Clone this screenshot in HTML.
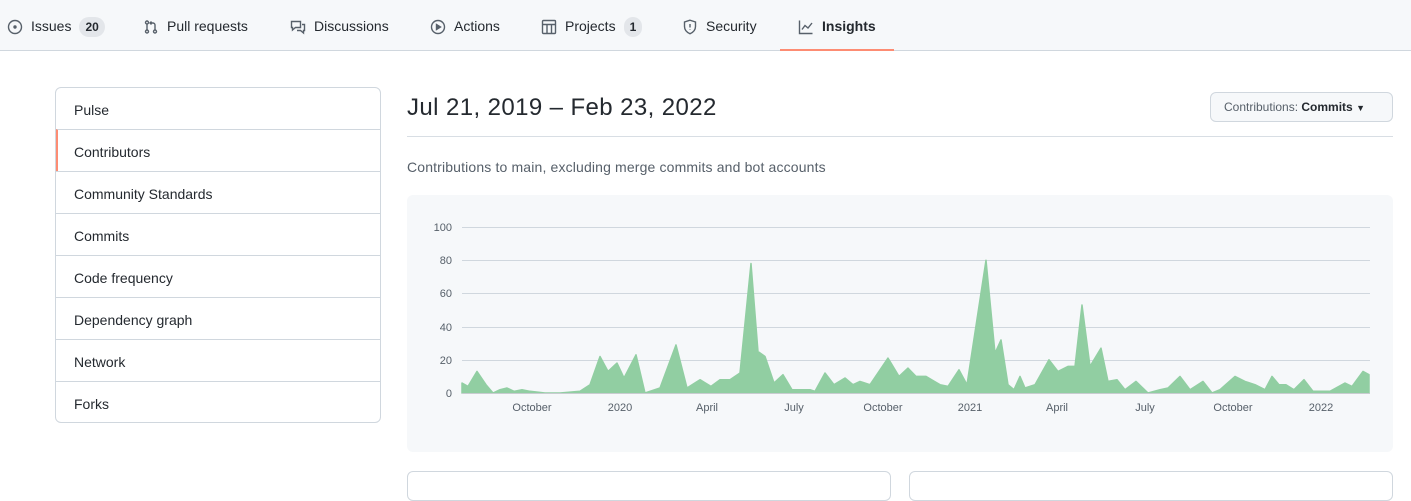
<!DOCTYPE html>
<html><head><meta charset="utf-8"><style>
*{box-sizing:border-box}
body{margin:0;width:1411px;height:480px;overflow:hidden;background:#fff;font-family:"Liberation Sans",sans-serif;color:#24292f}
.nav{position:absolute;left:0;top:0;width:1411px;height:51px;background:#f6f8fa;border-bottom:1px solid #d0d7de}
.tab{position:absolute;top:1px;height:51px;line-height:51px;font-size:14px;color:#24292f;display:flex;align-items:center;gap:8px}
.tab svg{width:16px;height:16px;fill:none;stroke:#57606a;stroke-width:1.4}
.cnt{display:inline-block;background:#e3e6ea;border-radius:10px;font-size:12px;line-height:20px;padding:0 6px;font-weight:bold;margin-left:0}
.side{position:absolute;left:55px;top:87px;width:326px;height:336px;border:1px solid #d0d7de;border-radius:6px;overflow:hidden}
.side div{height:42px;line-height:44px;padding-left:18px;font-size:14px;border-top:1px solid #d0d7de}
.side div:first-child{border-top:none;height:41px}
.side .on{border-left:2px solid #fd8c73;padding-left:16px}
</style></head><body>
<div class="nav">
<div class="tab" style="left:7px"><svg viewBox="0 0 16 16"><circle cx="8" cy="8" r="6.5"/><circle cx="8" cy="8" r="1" fill="#57606a"/></svg>Issues <span class="cnt">20</span></div>
<div class="tab" style="left:143px"><svg viewBox="0 0 16 16"><circle cx="4" cy="3.5" r="1.5"/><circle cx="4" cy="12.5" r="1.5"/><circle cx="12" cy="12.5" r="1.5"/><path d="M4 5v6M12 11V6a2 2 0 0 0-2-2H7M8.5 2.5 7 4l1.5 1.5"/></svg>Pull requests</div>
<div class="tab" style="left:290px"><svg viewBox="0 0 16 16"><path d="M1.5 2.5h9v6h-5l-3 2.5v-2.5h-1zM12 5.5h2.5v6h-1V14l-3-2.5H7"/></svg>Discussions</div>
<div class="tab" style="left:430px"><svg viewBox="0 0 16 16"><circle cx="8" cy="8" r="6.5"/><path d="M6.5 5.5v5l4-2.5z" fill="#57606a"/></svg>Actions</div>
<div class="tab" style="left:541px"><svg viewBox="0 0 16 16"><rect x="1.5" y="1.5" width="13" height="13" rx="1"/><path d="M1.5 5.5h13M6 5.5v9M10.5 5.5v9"/></svg>Projects <span class="cnt">1</span></div>
<div class="tab" style="left:682px"><svg viewBox="0 0 16 16"><path d="M8 1.2 2.5 3v4.5c0 3.5 2.7 6 5.5 7.3 2.8-1.3 5.5-3.8 5.5-7.3V3z"/><path d="M8 5v3.5M8 10.5v.5"/></svg>Security</div>
<div class="tab" style="left:798px;font-weight:bold"><svg viewBox="0 0 16 16"><path d="M1.5 1.5v13h13M4 10.5l3-4 3 2.5 4-5"/></svg>Insights</div>
<div style="position:absolute;left:780px;top:49px;width:114px;height:2px;background:#fd8c73"></div>
</div>
<div class="side">
<div>Pulse</div><div class="on">Contributors</div><div>Community Standards</div><div>Commits</div><div>Code frequency</div><div>Dependency graph</div><div>Network</div><div>Forks</div>
</div>
<div style="position:absolute;left:407px;top:94px;font-size:24px;letter-spacing:0.4px;color:#24292f">Jul 21, 2019 – Feb 23, 2022</div>
<div style="position:absolute;left:1210px;top:92px;width:183px;height:30px;border:1px solid #d0d7de;border-radius:6px;background:#f6f8fa;font-size:12px;line-height:29px;padding-left:13px;color:#57606a">Contributions: <b style="color:#24292f">Commits</b> <span style="font-size:9px;color:#24292f">▼</span></div>
<div style="position:absolute;left:407px;top:136px;width:986px;height:1px;background:#d8dee4"></div>
<div style="position:absolute;left:407px;top:159px;font-size:14px;color:#57606a;letter-spacing:0.15px">Contributions to main, excluding merge commits and bot accounts</div>
<div style="position:absolute;left:407px;top:195px;width:986px;height:257px;background:#f6f8fa;border-radius:6px"></div>
<svg style="position:absolute;left:0;top:0" width="1411" height="480">
<g stroke="#d0d7de" stroke-width="1"><path d="M462 227.5H1370M462 260.5H1370M462 293.5H1370M462 327.5H1370M462 360.5H1370M462 393.5H1370"/></g>
<g font-size="11" fill="#57606a" font-family="Liberation Sans,sans-serif" text-anchor="end"><text x="452" y="231">100</text><text x="452" y="264">80</text><text x="452" y="297">60</text><text x="452" y="331">40</text><text x="452" y="364">20</text><text x="452" y="397">0</text></g>
<path fill="#91cea2" stroke="#91cea2" stroke-width="1.5" stroke-linejoin="round" d="M462 393L462 383 468 386.4 477 371.4 486 384.7 493 393 500 389.7 507 388 514 391.3 522 389.7 530 391.3 545 393 560 393 580 391.3 590 384.7 600 356.5 608 371.4 617 363.1 624 378 636 354.8 645 393 660 388 676 344.9 687 388 700 379.7 711 386.4 720 379.7 730 379.7 740 373 751 263.5 758 351.5 765 356.5 774 383 783 374.7 792 389.7 810 389.7 815 391.3 825 373 834 384.7 845 378 853 384.7 860 381.4 870 384.7 888 358.1 899 376.4 908 368.1 916 376.4 926 376.4 940 384.7 948 386.4 959 369.8 967 384.7 986 260.2 995 353.2 1001 339.9 1008 384.7 1014 389.7 1020 376.4 1025 388 1035 384.7 1049 359.8 1058 371.4 1068 366.4 1075 366.4 1082 305 1090 366.4 1101 348.2 1108 381.4 1117 379.7 1125 389.7 1136 381.4 1148 393 1160 389.7 1168 388 1180 376.4 1190 389.7 1203 381.4 1212 393 1220 389.7 1235 376.4 1245 381.4 1255 384.7 1265 389.7 1272 376.4 1279 384.7 1286 384.7 1294 389.7 1304 379.7 1313 391.3 1330 391.3 1345 383 1352 386.4 1363 371.4 1369 374.7 1369 393Z"/>
<path stroke="#c8ccd0" d="M462 393.5H1370"/>
<g font-size="11" fill="#57606a" font-family="Liberation Sans,sans-serif" text-anchor="middle"><text x="532" y="411">October</text><text x="620" y="411">2020</text><text x="707" y="411">April</text><text x="794" y="411">July</text><text x="883" y="411">October</text><text x="970" y="411">2021</text><text x="1057" y="411">April</text><text x="1145" y="411">July</text><text x="1233" y="411">October</text><text x="1321" y="411">2022</text></g>
</svg>
<div style="position:absolute;left:407px;top:471px;width:484px;height:30px;border:1px solid #d0d7de;border-radius:6px"></div>
<div style="position:absolute;left:909px;top:471px;width:484px;height:30px;border:1px solid #d0d7de;border-radius:6px"></div>
</body></html>
